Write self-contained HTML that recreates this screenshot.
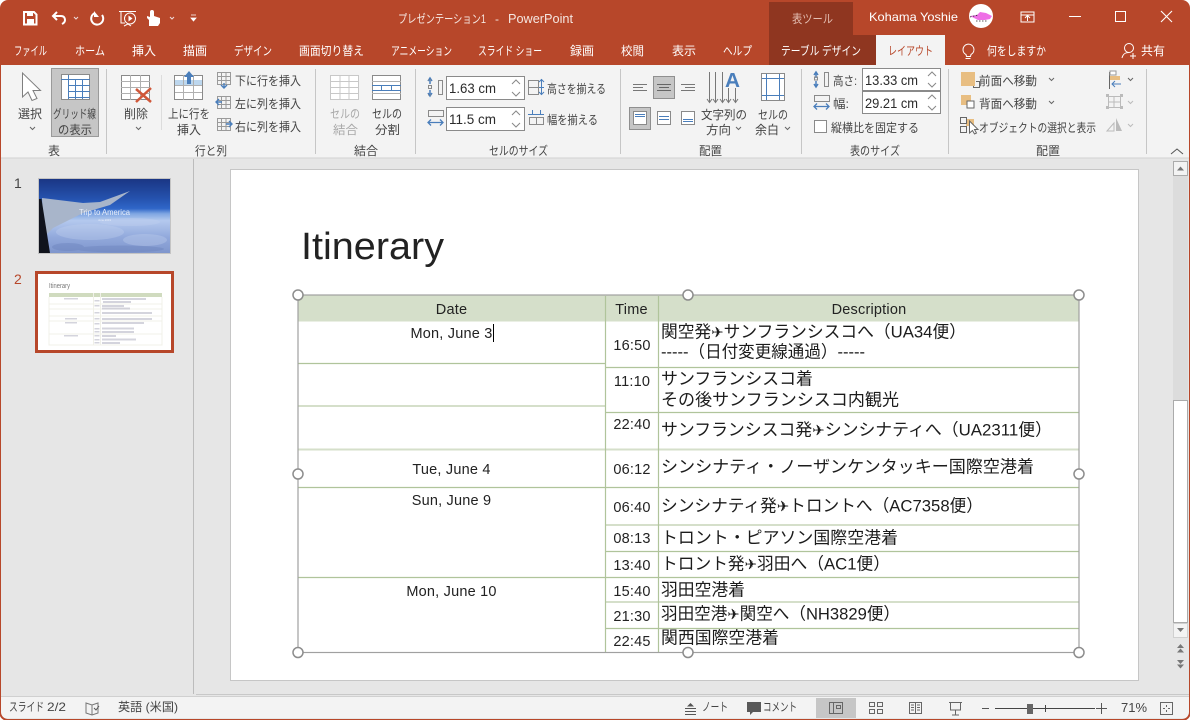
<!DOCTYPE html>
<html lang="ja"><head><meta charset="utf-8"><title>PowerPoint</title>
<style>
html,body{margin:0;padding:0;background:#fff;width:1190px;height:720px;overflow:hidden}
svg{display:block}
text{font-family:"Liberation Sans","Noto Sans CJK JP",sans-serif;font-size:12px;fill:#444;white-space:pre}
.w{fill:#fff}
.m{fill:#2b2b2b}
.d{fill:#a8a8a8}
.b{font-size:14.5px;letter-spacing:.2px;fill:#222}
.c{font-size:17px;fill:#1c1c1c}
.p{font-family:"DejaVu Sans",sans-serif;font-size:15px}
.s{fill:none;stroke:#7f7f7f;stroke-width:1}
.bl{fill:none;stroke:#4a7ebb;stroke-width:1}
.bf{fill:#4a7ebb}
.sep{stroke:#c6c6c6;stroke-width:1}
.tl{stroke:#b0c49b;stroke-width:1.2}
.tl2{stroke:#d5dfca;stroke-width:2}
.ws{fill:none;stroke:#fff;stroke-width:1.5}
.gs{fill:none;stroke:#666;stroke-width:1}
</style></head><body>
<svg width="1190" height="720" viewBox="0 0 1190 720" xmlns="http://www.w3.org/2000/svg">
<defs>
<linearGradient id="sky" x1="0" y1="0" x2="0" y2="1">
<stop offset="0" stop-color="#1a3583"/><stop offset=".25" stop-color="#2450ab"/><stop offset=".4" stop-color="#2f66c8"/><stop offset=".47" stop-color="#7fa6e2"/><stop offset=".56" stop-color="#b4c9ee"/><stop offset=".78" stop-color="#92a9dc"/><stop offset="1" stop-color="#7f96cc"/>
</linearGradient>
</defs>
<rect x="0" y="0" width="1190" height="720" fill="#fff"/>
<rect x="0" y="0" width="1190" height="720" rx="8" fill="#b7472a"/>
<rect x="1" y="65" width="1188" height="654" rx="6" fill="#e6e6e6"/>
<rect x="1" y="65" width="1188" height="93" fill="#f3f3f3"/>
<line x1="1" y1="158" x2="1189" y2="158" stroke="#d2d2d2"/>

<!-- Title bar -->
<rect x="769" y="2" width="84" height="34" fill="#8f3620"/>
<rect x="769" y="35" width="107" height="30" fill="#8f3620"/>
<rect x="876" y="35" width="69" height="31" fill="#f3f3f3"/>
<text x="398" y="23" textLength="88" lengthAdjust="spacingAndGlyphs" style="fill:#f5e6e0">プレゼンテーション1</text>
<text x="495" y="23" style="fill:#f5e6e0">-</text>
<text x="508" y="23" textLength="65" lengthAdjust="spacingAndGlyphs" style="fill:#f5e6e0;font-size:12.5px">PowerPoint</text>
<text x="792" y="23" textLength="41" lengthAdjust="spacingAndGlyphs" style="fill:#e4bfb3">表ツール</text>
<text class="w" x="869" y="21" textLength="89" lengthAdjust="spacingAndGlyphs">Kohama Yoshie</text>
<circle cx="981" cy="16" r="12" fill="#fff"/>
<path d="M970 16l7-1 3-3 6 1 4 2 2 1-2 3-5 1-7 0-4-2z" fill="#ee6fe6"/>
<path d="M970 17l8-2M976 21h12" stroke="#222" stroke-width=".8" stroke-dasharray="1.5 1.5" fill="none"/>
<!-- window controls -->
<path d="M1021 12h13v10h-13zM1021 15h13M1027.5 21v-5M1025 18l2.5-2.500 2.500 2.500" fill="none" stroke="#fff"/>
<path d="M1069 16.500h12" stroke="#fff"/>
<rect x="1115.500" y="11.500" width="10" height="10" fill="none" stroke="#fff"/>
<path d="M1161 11l11 11M1172 11l-11 11" stroke="#fff" stroke-width="1.100"/>
<!-- QAT -->
<path d="M24 12h10l2.500 2.500v10h-12.500z" fill="none" stroke="#fff" stroke-width="2"/>
<rect x="27" y="12" width="6" height="4" fill="#fff"/><rect x="27" y="19" width="7" height="5" fill="#fff"/>
<path d="M57 12l-4 4 4 4M53 16h8c3 0 4 2 4 4s-1 3-3 4" fill="none" stroke="#fff" stroke-width="2"/>
<path d="M74 17l2 2 2-2" class="ws" style="stroke-width:1;stroke:#edd"/>
<path d="M95 13a6 6 0 1 0 7 2" fill="none" stroke="#fff" stroke-width="2"/><path d="M94 11v6h5z" fill="#fff"/>
<path d="M119 11.500h17M121 12v11h4M128 24l-4 2M128 24l3 2" fill="none" stroke="#fff"/><circle cx="130" cy="18.500" r="5.500" fill="#b7472a" stroke="#fff"/><path d="M128.500 15.500v6l4-3z" fill="#fff"/>
<path d="M149 26v-6l-2-2v-2l3 1v-5a1.800 1.800 0 0 1 4 0v4l6 2v5l-2 3z" fill="#fff"/>
<path d="M170 17l2 2 2-2" fill="none" stroke="#edd"/>
<path d="M191 15h5M191 18h5l-2.500 3z" fill="#fff" stroke="#fff" stroke-width=".8"/>

<!-- Tabs -->
<g style="fill:#fff">
<text class="w" x="14" y="55" textLength="33" lengthAdjust="spacingAndGlyphs">ファイル</text>
<text class="w" x="75" y="55" textLength="30" lengthAdjust="spacingAndGlyphs">ホーム</text>
<text class="w" x="132" y="55" textLength="24" lengthAdjust="spacingAndGlyphs">挿入</text>
<text class="w" x="183" y="55" textLength="24" lengthAdjust="spacingAndGlyphs">描画</text>
<text class="w" x="234" y="55" textLength="38" lengthAdjust="spacingAndGlyphs">デザイン</text>
<text class="w" x="299" y="55" textLength="65" lengthAdjust="spacingAndGlyphs">画面切り替え</text>
<text class="w" x="391" y="55" textLength="61" lengthAdjust="spacingAndGlyphs">アニメーション</text>
<text class="w" x="478" y="55" textLength="64" lengthAdjust="spacingAndGlyphs">スライド ショー</text>
<text class="w" x="570" y="55" textLength="24" lengthAdjust="spacingAndGlyphs">録画</text>
<text class="w" x="621" y="55" textLength="23" lengthAdjust="spacingAndGlyphs">校閲</text>
<text class="w" x="672" y="55" textLength="24" lengthAdjust="spacingAndGlyphs">表示</text>
<text class="w" x="723" y="55" textLength="29" lengthAdjust="spacingAndGlyphs">ヘルプ</text>
<text class="w" x="781" y="55" textLength="80" lengthAdjust="spacingAndGlyphs">テーブル デザイン</text>
<text x="888" y="55" textLength="45" lengthAdjust="spacingAndGlyphs" style="fill:#b7472a">レイアウト</text>
<text class="w" x="987" y="55" textLength="59" lengthAdjust="spacingAndGlyphs">何をしますか</text>
<text class="w" x="1141" y="55" textLength="24" lengthAdjust="spacingAndGlyphs">共有</text>
</g>
<path d="M963 50a5.500 5.500 0 1 1 8 4.500l-.5 2h-4l-.5-2a5.500 5.500 0 0 1-3-4.500zM965.500 58.500h5" fill="none" stroke="#fff"/>
<circle cx="1129" cy="48" r="4.500" fill="none" stroke="#fff"/><path d="M1122 58c1-4 3-5.500 7-5.500M1133 53v6M1130 56h6" fill="none" stroke="#fff"/>

<!-- Ribbon separators -->
<g class="sep">
<line x1="106.500" y1="69" x2="106.500" y2="154"/><line x1="315.500" y1="69" x2="315.500" y2="154"/><line x1="415.500" y1="69" x2="415.500" y2="154"/><line x1="620.500" y1="69" x2="620.500" y2="154"/><line x1="801.500" y1="69" x2="801.500" y2="154"/><line x1="948.500" y1="69" x2="948.500" y2="154"/><line x1="1146.500" y1="69" x2="1146.500" y2="154"/><line x1="161.500" y1="75" x2="161.500" y2="130" stroke="#dcdcdc"/>
</g>

<!-- group: 表 -->
<path d="M22.500 73v24l5.500-5 4 8.500 5-2-4-8h7.500z" fill="#fff" stroke="#7f7f7f"/>
<text x="18" y="118" textLength="24" lengthAdjust="spacingAndGlyphs">選択</text>
<path d="M30 127l2.500 2.500 2.500-2.500" class="gs"/>
<rect x="51.500" y="68.500" width="47" height="68" fill="#c6c6c6" stroke="#9a9a9a"/>
<rect x="61.500" y="74.500" width="28" height="25" fill="#fff" stroke="#8a8a8a"/>
<path d="M61 79.500h29M68.500 75v24M75.500 80v19M82.500 80v19M68 85.500h22M68 91.500h22M68 97.500h22" class="bl"/>
<text x="53" y="118" textLength="43" lengthAdjust="spacingAndGlyphs">グリッド線</text>
<text x="58" y="134" textLength="34" lengthAdjust="spacingAndGlyphs">の表示</text>
<text x="48" y="155" textLength="12" lengthAdjust="spacingAndGlyphs">表</text>

<!-- 行と列 -->
<rect x="121.500" y="75.500" width="28" height="24" fill="#fff" stroke="#8a8a8a"/>
<path d="M130.500 75v25M140.500 75v25M121 81.500h29M121 87.500h29M121 93.500h29" stroke="#b0b0b0" fill="none"/>
<path d="M136 89l15 13M151 88l-15 14" stroke="#d0583a" stroke-width="2.500"/>
<text x="124" y="118" textLength="24" lengthAdjust="spacingAndGlyphs">削除</text>
<path d="M136 127l2.500 2.500 2.500-2.500" class="gs"/>
<rect x="174.500" y="75.500" width="28" height="24" fill="#fff" stroke="#8a8a8a"/>
<rect x="175" y="80" width="27" height="5" fill="#bdd7ee"/>
<path d="M183.500 75v25M193.500 75v25M175 85.500h27M175 92.500h27" stroke="#b0b0b0" fill="none"/>
<path d="M189 71l-5 6h3v7h4v-7h3z" class="bf"/>
<text x="168" y="118" textLength="42" lengthAdjust="spacingAndGlyphs">上に行を</text>
<text x="177" y="134" textLength="24" lengthAdjust="spacingAndGlyphs">挿入</text>
<g fill="none" stroke="#9a9a9a">
<path d="M217.500 72.500h13v12h-13zM221.500 73v11M226 73v11M218 76.500h12M218 80.500h12"/>
<path d="M217.500 96.500h13v12h-13zM221.500 97v11M226 97v11M218 100.500h12M218 104.500h12"/>
<path d="M217.500 118.500h13v12h-13zM221.500 119v11M226 119v11M218 122.500h12M218 126.500h12"/>
</g>
<path d="M224 83v4M221 85l3 3 3-3" class="bl" style="stroke-width:1.400"/>
<path d="M222 102h-5M219 99l-3 3 3 3" class="bl" style="stroke-width:1.400"/>
<path d="M226 124h5M229 121l3 3-3 3" class="bl" style="stroke-width:1.400"/>
<text x="235" y="85" textLength="66" lengthAdjust="spacingAndGlyphs">下に行を挿入</text>
<text x="235" y="108" textLength="66" lengthAdjust="spacingAndGlyphs">左に列を挿入</text>
<text x="235" y="131" textLength="66" lengthAdjust="spacingAndGlyphs">右に列を挿入</text>
<text x="195" y="155" textLength="32" lengthAdjust="spacingAndGlyphs">行と列</text>

<!-- 結合 -->
<path d="M330.500 75.500h28v24h-28zM340 75v25M349 75v25M330 81.500h29M330 87.500h29M330 93.500h29" fill="#fff" stroke="#c8c8c8"/>
<text class="d" x="330" y="118" textLength="30" lengthAdjust="spacingAndGlyphs">セルの</text>
<text class="d" x="333" y="134" textLength="25" lengthAdjust="spacingAndGlyphs">結合</text>
<rect x="372.500" y="75.500" width="28" height="24" fill="#fff" stroke="#8a8a8a"/>
<path d="M372 81.500h29M372 93.500h29" stroke="#b0b0b0" fill="none"/>
<path d="M372 85.500h29M372 90.500h29M381.500 85v6M391.500 85v6" class="bl"/>
<text x="372" y="118" textLength="30" lengthAdjust="spacingAndGlyphs">セルの</text>
<text x="375" y="134" textLength="25" lengthAdjust="spacingAndGlyphs">分割</text>
<text x="354" y="155" textLength="24" lengthAdjust="spacingAndGlyphs">結合</text>

<!-- セルのサイズ -->
<g fill="none" stroke="#8a8a8a"><rect x="438.500" y="80.500" width="4" height="14"/><rect x="428.500" y="85.500" width="3" height="3" /></g>
<path d="M430 79v5M428 81l2-3 2 3M430 90v5M428 93l2 3 2-3" class="bl" style="stroke-width:1.500"/>
<path d="M428 80h4M428 95h4" stroke="#8a8a8a" stroke-dasharray="1 1"/>
<rect x="446.500" y="76.500" width="78" height="23" fill="#fff" stroke="#8a8a8a"/>
<text class="m" x="449" y="93" textLength="47" lengthAdjust="spacingAndGlyphs" style="font-size:14px">1.63 cm</text>
<path d="M512 84l4-4 4 4M512 92l4 4 4-4" fill="none" stroke="#888"/>
<rect x="428.500" y="110.500" width="15" height="6" fill="none" stroke="#8a8a8a"/>
<path d="M428 122.500h15M431 119.500l-3 3 3 3M440 119.500l3 3-3 3" class="bl" style="stroke-width:1.300"/>
<rect x="446.500" y="107.500" width="78" height="23" fill="#fff" stroke="#8a8a8a"/>
<text class="m" x="449" y="124" textLength="47" lengthAdjust="spacingAndGlyphs" style="font-size:14px">11.5 cm</text>
<path d="M512 115l4-4 4 4M512 123l4 4 4-4" fill="none" stroke="#888"/>
<path d="M528.500 80.500h10v14h-10zM528 87.500h11" fill="none" stroke="#8a8a8a"/>
<path d="M541.500 79v16M539 82l2.500-2.500 2.500 2.500M539 92l2.500 2.500 2.500-2.500M539 87.500h5" class="bl"/>
<path d="M529.500 117.500h14v7h-14zM536.500 118v7" fill="none" stroke="#8a8a8a"/>
<path d="M528 114.500h16M532.500 110v5M540.500 110v5" class="bl"/>
<text x="547" y="93" textLength="59" lengthAdjust="spacingAndGlyphs">高さを揃える</text>
<text x="547" y="124" textLength="51" lengthAdjust="spacingAndGlyphs">幅を揃える</text>
<text x="489" y="155" textLength="59" lengthAdjust="spacingAndGlyphs">セルのサイズ</text>

<!-- 配置 cell -->
<path d="M633 84.500h14M633 87.500h10M633 90.500h14" class="gs" style="stroke:#777"/>
<rect x="653.500" y="76.500" width="21" height="22" fill="#c6c6c6" stroke="#8f8f8f"/>
<path d="M657 84.500h14M659 87.500h10M657 90.500h14" class="gs"/>
<path d="M681 84.500h14M685 87.500h10M681 90.500h14" class="gs" style="stroke:#777"/>
<rect x="629.500" y="107.500" width="21" height="22" fill="#c6c6c6" stroke="#8f8f8f"/>
<rect x="633.500" y="111.500" width="13" height="13" fill="#fff" stroke="#8a8a8a"/><path d="M635 114.500h10M635 116.500h10" stroke="#4a7ebb"/>
<rect x="657.500" y="111.500" width="13" height="13" fill="#fff" stroke="#8a8a8a"/><path d="M659 116.500h10M659 119.500h10" stroke="#4a7ebb"/>
<rect x="681.500" y="111.500" width="13" height="13" fill="#fff" stroke="#8a8a8a"/><path d="M683 119.500h10M683 121.500h10" stroke="#4a7ebb"/>
<path d="M709.500 72v30M715.500 72v30M722.500 72v30M728.500 88v14M735.500 88v14" stroke="#777" fill="none"/>
<path d="M707 99l2.500 3.500 2.500-3.500M713 99l2.500 3.500 2.500-3.500M720 99l2.500 3.500 2.500-3.500M726 99l2.500 3.500 2.500-3.500M733 99l2.500 3.500 2.500-3.500" fill="none" stroke="#777"/>
<text x="725" y="87" textLength="15" lengthAdjust="spacingAndGlyphs" style="font-size:20px;font-weight:bold;fill:#4a7ebb">A</text>
<text x="701" y="119" textLength="46" lengthAdjust="spacingAndGlyphs">文字列の</text>
<text x="706" y="134" textLength="25" lengthAdjust="spacingAndGlyphs">方向</text>
<path d="M736 127l2.500 2.500 2.500-2.500" class="gs"/>
<rect x="761.500" y="73.500" width="23" height="27" fill="#fff" stroke="#8a8a8a"/>
<path d="M766.500 74v26M779.500 74v26M762 78.500h22M762 95.500h22" class="bl"/>
<text x="758" y="119" textLength="30" lengthAdjust="spacingAndGlyphs">セルの</text>
<text x="755" y="134" textLength="24" lengthAdjust="spacingAndGlyphs">余白</text>
<path d="M785 127l2.500 2.500 2.500-2.500" class="gs"/>
<text x="699" y="155" textLength="23" lengthAdjust="spacingAndGlyphs">配置</text>

<!-- 表のサイズ -->
<rect x="824.500" y="72.500" width="4" height="14" fill="none" stroke="#8a8a8a"/>
<path d="M816 73v5M814 75l2-3 2 3M816 81v5M814 84l2 3 2-3" class="bl" style="stroke-width:1.500"/>
<rect x="814.500" y="77" width="3" height="3" fill="none" stroke="#8a8a8a"/>
<rect x="814.500" y="95.500" width="15" height="6" fill="none" stroke="#8a8a8a"/>
<path d="M814 106.500h15M817 103.500l-3 3 3 3M826 103.500l3 3-3 3" class="bl" style="stroke-width:1.300"/>
<text x="833" y="85" textLength="24" lengthAdjust="spacingAndGlyphs">高さ:</text>
<text x="833" y="108" textLength="16" lengthAdjust="spacingAndGlyphs">幅:</text>
<rect x="862.500" y="68.500" width="78" height="22" fill="#fff" stroke="#8a8a8a"/>
<rect x="862.500" y="91.500" width="78" height="22" fill="#fff" stroke="#8a8a8a"/>
<text class="m" x="865" y="85" textLength="53" lengthAdjust="spacingAndGlyphs" style="font-size:14px">13.33 cm</text>
<text class="m" x="865" y="108" textLength="53" lengthAdjust="spacingAndGlyphs" style="font-size:14px">29.21 cm</text>
<path d="M928 76l4-4 4 4M928 83l4 4 4-4M928 99l4-4 4 4M928 106l4 4 4-4" fill="none" stroke="#888"/>
<rect x="814.500" y="120.500" width="12" height="12" fill="#fff" stroke="#8a8a8a"/>
<text x="831" y="132" textLength="88" lengthAdjust="spacingAndGlyphs">縦横比を固定する</text>
<text x="850" y="155" textLength="50" lengthAdjust="spacingAndGlyphs">表のサイズ</text>

<!-- 配置 object -->
<rect x="961" y="72" width="14" height="14" fill="#e8be82"/>
<path d="M976 81.500h3.500v6h-6v-1.500" fill="none" stroke="#666"/>
<rect x="961" y="95" width="10" height="10" fill="#e8be82"/><rect x="967" y="101" width="7" height="7" fill="#fff" stroke="#666"/>
<text x="979" y="85" textLength="58" lengthAdjust="spacingAndGlyphs">前面へ移動</text>
<text x="979" y="108" textLength="58" lengthAdjust="spacingAndGlyphs">背面へ移動</text>
<path d="M1049 78l2.500 2.500 2.500-2.500M1049 101l2.500 2.500 2.500-2.500" class="gs"/>
<rect x="966" y="119" width="8" height="7" fill="#e8be82"/>
<path d="M960.500 117.500h6v6h-6zM960.500 126.500h6v6h-6z" fill="none" stroke="#666"/>
<path d="M969.500 121v12l3-2.500 2 3.500 2-1-2-3.500h3.500z" fill="#fff" stroke="#666"/>
<text x="979" y="132" textLength="117" lengthAdjust="spacingAndGlyphs">オブジェクトの選択と表示</text>
<text x="1036" y="155" textLength="24" lengthAdjust="spacingAndGlyphs">配置</text>
<path d="M1109.500 72v17" stroke="#666"/><rect x="1110" y="76" width="10" height="4" fill="#e8be82"/><rect x="1110" y="71" width="6" height="4" fill="#fff" stroke="#999"/><path d="M1121 84h-9M1115 81l-3 3 3 3" class="bl"/>
<path d="M1128 78l2.500 2.500 2.500-2.500" class="gs"/>
<path d="M1108.500 96.500h12v11h-12zM1114 96v11M1108 102h12" fill="none" stroke="#bbb"/><path d="M1106 94h3v3h-3zM1120 94h3v3h-3zM1106 106h3v3h-3zM1120 106h3v3h-3z" fill="#bbb"/>
<path d="M1128 101l2.500 2.500 2.500-2.500" fill="none" stroke="#bbb"/>
<path d="M1107 131l7-8v8z" fill="none" stroke="#bbb"/><path d="M1116 118l6 13h-6z" fill="#bbb"/>
<path d="M1128 124l2.500 2.500 2.500-2.500" fill="none" stroke="#bbb"/>
<path d="M1171 154l6-5 6 5" fill="none" stroke="#555"/>

<!-- Panes -->
<line x1="193.500" y1="159" x2="193.500" y2="694" stroke="#bcbcbc"/>
<line x1="196" y1="694.500" x2="1189" y2="694.500" stroke="#c8c8c8"/>
<rect x="230.500" y="169.500" width="908" height="511" fill="#fff" stroke="#c6c6c6"/>

<!-- Thumbnails -->
<text x="14" y="188" style="font-size:14px;fill:#444">1</text>
<text x="14" y="284" style="font-size:14px;fill:#b7472a">2</text>
<rect x="38.500" y="178.500" width="132" height="75" fill="url(#sky)" stroke="#c4c4c4"/>
<g fill="#c3d2ef" opacity=".35"><ellipse cx="90" cy="232" rx="34" ry="8"/><ellipse cx="145" cy="240" rx="22" ry="6"/><ellipse cx="130" cy="222" rx="30" ry="4"/></g>
<g fill="#5f76b3" opacity=".3"><ellipse cx="120" cy="249" rx="44" ry="3.500"/><ellipse cx="68" cy="247" rx="16" ry="4"/></g>
<path d="M42 198l41 5 17-1 30-11-20 14-27 8-30 15-6 6-4-7z" fill="#a8b5ca"/>
<path d="M39 199h2.500l8.500 54h-11z" fill="#10131c"/>
<text x="79" y="215" textLength="51" lengthAdjust="spacingAndGlyphs" style="font-size:8px;fill:#e8eefa">Trip to America</text>
<text x="98" y="221" textLength="13" lengthAdjust="spacingAndGlyphs" style="font-size:3px;fill:#e8eefa">June 2019</text>
<rect x="36.500" y="272.500" width="136" height="79" fill="#fff" stroke="#b7472a" stroke-width="3"/>
<text x="49" y="288" textLength="21" lengthAdjust="spacingAndGlyphs" style="font-size:7px;fill:#777">Itinerary</text>
<rect x="49" y="293" width="113" height="4" fill="#d0dbbf"/>
<path d="M49 297v48h113v-48M93.500 293v52M100.500 293v52M49 304h113M49 309h113M49 316h113M49 321h113M49 334h113" fill="none" stroke="#f0f0e8"/>
<g fill="#b8b8c8" opacity=".6">
<rect x="64" y="298" width="14" height="1.500"/><rect x="102" y="298" width="44" height="2"/><rect x="103" y="301" width="28" height="2"/>
<rect x="102" y="305" width="22" height="2"/><rect x="102" y="307.500" width="28" height="2"/><rect x="102" y="312" width="50" height="2"/>
<rect x="65" y="318" width="12" height="1.500"/><rect x="102" y="318" width="50" height="2"/>
<rect x="65" y="322" width="12" height="1.500"/><rect x="102" y="322" width="42" height="2"/><rect x="102" y="327.500" width="32" height="2"/><rect x="102" y="331" width="32" height="2"/>
<rect x="64" y="335" width="14" height="1.500"/><rect x="102" y="335" width="14" height="2"/><rect x="102" y="338.500" width="34" height="2"/><rect x="102" y="342" width="18" height="2"/>
<rect x="94.500" y="300" width="5" height="1.500"/><rect x="94.500" y="305" width="5" height="1.500"/><rect x="94.500" y="312" width="5" height="1.500"/><rect x="94.500" y="318" width="5" height="1.500"/><rect x="94.500" y="323" width="5" height="1.500"/><rect x="94.500" y="328" width="5" height="1.500"/><rect x="94.500" y="331" width="5" height="1.500"/><rect x="94.500" y="335" width="5" height="1.500"/><rect x="94.500" y="339" width="5" height="1.500"/><rect x="94.500" y="342" width="5" height="1.500"/>
</g>

<!-- Slide -->
<text x="301" y="259" textLength="143" lengthAdjust="spacingAndGlyphs" style="font-size:38px;fill:#222">Itinerary</text>
<rect x="298" y="295" width="781" height="25" fill="#d5dfca"/>
<g>
<line class="tl2" x1="298" y1="320.500" x2="1079" y2="320.500"/>
<line class="tl" x1="298" y1="363.500" x2="605" y2="363.500"/>
<line class="tl" x1="605" y1="367.500" x2="1079" y2="367.500"/>
<line class="tl2" x1="298" y1="406" x2="605" y2="406"/>
<line class="tl" x1="605" y1="412.500" x2="1079" y2="412.500"/>
<line class="tl2" x1="298" y1="449.500" x2="1079" y2="449.500"/>
<line class="tl" x1="298" y1="487.500" x2="1079" y2="487.500"/>
<line class="tl2" x1="605" y1="525" x2="1079" y2="525"/>
<line class="tl" x1="605" y1="551.500" x2="1079" y2="551.500"/>
<line class="tl" x1="298" y1="577.500" x2="1079" y2="577.500"/>
<line class="tl2" x1="605" y1="602" x2="1079" y2="602"/>
<line class="tl" x1="605" y1="628.500" x2="1079" y2="628.500"/>
<line class="tl" x1="605.500" y1="296" x2="605.500" y2="652"/>
<line class="tl" x1="658.500" y1="296" x2="658.500" y2="652"/>
</g>
<rect x="298" y="295" width="781" height="357.500" fill="none" stroke="#a0a0a0" stroke-width="1.200"/>
<g fill="#fff" stroke="#8d8d8d" stroke-width="1.500">
<circle cx="298" cy="295" r="5"/><circle cx="688" cy="295" r="5"/><circle cx="1079" cy="295" r="5"/><circle cx="298" cy="474" r="5"/><circle cx="1079" cy="474" r="5"/><circle cx="298" cy="652.500" r="5"/><circle cx="688" cy="652.500" r="5"/><circle cx="1079" cy="652.500" r="5"/>
</g>
<g text-anchor="middle">
<text class="b" x="451.500" y="314">Date</text>
<text class="b" x="631.500" y="314">Time</text>
<text class="b" x="869" y="314">Description</text>
<text class="b" x="451.500" y="338">Mon, June 3</text>
<text class="b" x="451.500" y="474">Tue, June 4</text>
<text class="b" x="451.500" y="505">Sun, June 9</text>
<text class="b" x="451.500" y="596">Mon, June 10</text>
<text class="b" x="632" y="350">16:50</text>
<text class="b" x="632" y="386">11:10</text>
<text class="b" x="632" y="429">22:40</text>
<text class="b" x="632" y="474">06:12</text>
<text class="b" x="632" y="512">06:40</text>
<text class="b" x="632" y="543">08:13</text>
<text class="b" x="632" y="570">13:40</text>
<text class="b" x="632" y="596">15:40</text>
<text class="b" x="632" y="621">21:30</text>
<text class="b" x="632" y="646">22:45</text>
</g>
<line x1="493.500" y1="324" x2="493.500" y2="342" stroke="#000"/>
<text class="c" x="661" y="337.500" textLength="305" lengthAdjust="spacingAndGlyphs">関空発<tspan class="p">✈</tspan>サンフランシスコへ（UA34便）</text>
<text class="c" x="661" y="357.500" textLength="204" lengthAdjust="spacingAndGlyphs">-----（日付変更線通過）-----</text>
<text class="c" x="661" y="384.500" textLength="152" lengthAdjust="spacingAndGlyphs">サンフランシスコ着</text>
<text class="c" x="661" y="405.500" textLength="238" lengthAdjust="spacingAndGlyphs">その後サンフランシスコ内観光</text>
<text class="c" x="661" y="435.500" textLength="391" lengthAdjust="spacingAndGlyphs">サンフランシスコ発<tspan class="p">✈</tspan>シンシナティへ（UA2311便）</text>
<text class="c" x="661" y="472.500" textLength="373" lengthAdjust="spacingAndGlyphs">シンシナティ・ノーザンケンタッキー国際空港着</text>
<text class="c" x="661" y="511.500" textLength="322" lengthAdjust="spacingAndGlyphs">シンシナティ発<tspan class="p">✈</tspan>トロントへ（AC7358便）</text>
<text class="c" x="661" y="543.500" textLength="237" lengthAdjust="spacingAndGlyphs">トロント・ピアソン国際空港着</text>
<text class="c" x="661" y="569.500" textLength="229" lengthAdjust="spacingAndGlyphs">トロント発<tspan class="p">✈</tspan>羽田へ（AC1便）</text>
<text class="c" x="661" y="595.500" textLength="84" lengthAdjust="spacingAndGlyphs">羽田空港着</text>
<text class="c" x="661" y="619.500" textLength="239" lengthAdjust="spacingAndGlyphs">羽田空港<tspan class="p">✈</tspan>関空へ（NH3829便）</text>
<text class="c" x="661" y="643.500" textLength="118" lengthAdjust="spacingAndGlyphs">関西国際空港着</text>

<!-- Scrollbar -->
<rect x="1173" y="161" width="15" height="240" fill="#dcdcdc"/>
<rect x="1173.500" y="161.500" width="14" height="14" fill="#f3f3f3" stroke="#ababab"/>
<path d="M1177 170.500l3.500-4 3.500 4z" fill="#777"/>
<rect x="1173.500" y="400.500" width="14" height="222" fill="#fff" stroke="#ababab"/>
<rect x="1173.500" y="623.500" width="14" height="14" fill="#f3f3f3" stroke="#d0d0d0"/>
<path d="M1177 628l3.500 4 3.500-4z" fill="#777"/>
<path d="M1177 648l3.500-4 3.500 4zM1177 652.500l3.500-4 3.500 4zM1177 660l3.500 4 3.500-4zM1177 664.500l3.500 4 3.500-4z" fill="#777"/>

<!-- Status bar -->
<rect x="1" y="697" width="1188" height="21" fill="#f3f3f3"/>
<line x1="1" y1="696.500" x2="1189" y2="696.500" stroke="#d0d0d0"/>
<path d="M0 712v0a8 8 0 0 0 8 8h1174a8 8 0 0 0 8-8" fill="none" stroke="#b7472a" stroke-width="2"/>
<text x="9" y="711" textLength="35" lengthAdjust="spacingAndGlyphs">スライド</text>
<text x="47" y="711" textLength="19" lengthAdjust="spacingAndGlyphs">2/2</text>
<path d="M86 703l6 2 6-2v10l-6 2-6-2zM92 705v10" fill="none" stroke="#777"/><path d="M94 708l2 2 3-4" fill="none" stroke="#555"/>
<text x="118" y="711" textLength="60" lengthAdjust="spacingAndGlyphs">英語 (米国)</text>
<path d="M685 708.500h11M685 711.500h11M685 714.500h11" stroke="#555"/><path d="M687 706.500l3.500-3.500 3.500 3.500z" fill="#555"/>
<text x="702" y="711" textLength="26" lengthAdjust="spacingAndGlyphs">ノート</text>
<path d="M747 702h14v10h-8l-3 3v-3h-3z" fill="#595959"/>
<text x="763" y="711" textLength="34" lengthAdjust="spacingAndGlyphs">コメント</text>
<rect x="816" y="698" width="40" height="20" fill="#c6c6c6"/>
<path d="M829.500 702.500h13v11h-13zM833.500 703v10M836.500 705.500h4v3h-4z" fill="none" stroke="#666"/>
<path d="M869.500 702.500h5v4h-5zM877.500 702.500h5v4h-5zM869.500 709.500h5v4h-5zM877.500 709.500h5v4h-5z" fill="none" stroke="#666"/>
<path d="M909.500 702.500h12v11h-12zM915.500 703v11M911 705h3M911 707.500h3M911 710h3M917 705h3M917 707.500h3M917 710h3" fill="none" stroke="#666"/>
<path d="M949 702.500h13M950.500 703v7h10v-7M955.500 710v5M952 715h7" fill="none" stroke="#666"/>
<path d="M982 708.500h7" stroke="#555"/>
<path d="M995 708.500h100" stroke="#444"/><path d="M1045.500 705v7" stroke="#444"/>
<rect x="1027" y="704" width="6" height="10" fill="#666"/>
<path d="M1096 708.500h11M1101.500 703v11" stroke="#555"/>
<text x="1121" y="712" textLength="26" lengthAdjust="spacingAndGlyphs" style="font-size:13px">71%</text>
<path d="M1160.500 702.500h12v12h-12zM1166.500 705v2M1166.500 710v2M1163 708.500h2M1168 708.500h2" fill="none" stroke="#666"/>
</svg>
</body></html>
